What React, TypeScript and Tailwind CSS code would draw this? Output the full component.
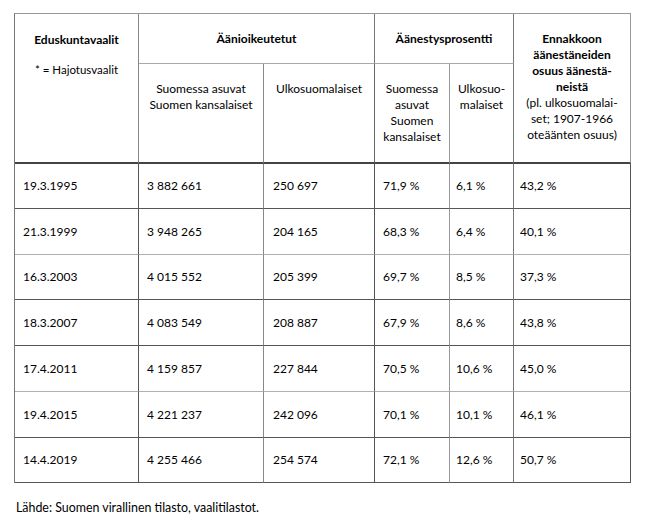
import React from "react";

const rows = [
  ["19.3.1995", "3 882 661", "250 697", "71,9 %", "6,1 %", "43,2 %"],
  ["21.3.1999", "3 948 265", "204 165", "68,3 %", "6,4 %", "40,1 %"],
  ["16.3.2003", "4 015 552", "205 399", "69,7 %", "8,5 %", "37,3 %"],
  ["18.3.2007", "4 083 549", "208 887", "67,9 %", "8,6 %", "43,8 %"],
  ["17.4.2011", "4 159 857", "227 844", "70,5 %", "10,6 %", "45,0 %"],
  ["19.4.2015", "4 221 237", "242 096", "70,1 %", "10,1 %", "46,1 %"],
  ["14.4.2019", "4 255 466", "254 574", "72,1 %", "12,6 %", "50,7 %"],
];

const lightRows = [1, 4];

export default function App() {
  return (
    <div className="w-[647px] h-[532px] bg-white text-black font-['Lato','Liberation_Sans',sans-serif] text-[12px] leading-[16px] pt-[13px]">
      <div className="ml-[14px] w-[617px] grid grid-cols-[124px_125px_111px_75px_64px_117px] grid-rows-[50px_100px_45px_46px_45px_46px_46px_46px_45px] border-l border-t border-l-[#777] border-t-[#999]">
        {/* header col 1 */}
        <div className="row-span-2 border-r border-r-[#888] border-b-2 border-b-[#444] flex flex-col items-center pt-[18px]">
          <div className="font-bold">Eduskuntavaalit</div>
          <div className="mt-[14px] text-[11.5px]">* = Hajotusvaalit</div>
        </div>
        <div className="col-span-2 border-r border-r-[#777] border-b border-b-[#aaa] flex items-center justify-center font-bold">
          Äänioikeutetut
        </div>
        <div className="col-span-2 border-r border-r-[#777] border-b border-b-[#aaa] flex items-center justify-center font-bold">
          Äänestysprosentti
        </div>
        <div className="row-span-2 border-r border-r-[#999] border-b-2 border-b-[#444] flex flex-col items-center text-center pt-[17px] leading-[16px]">
          <div className="font-bold">Ennakkoon</div>
          <div className="font-bold">äänestäneiden</div>
          <div className="font-bold">osuus äänestä-</div>
          <div className="font-bold">neistä</div>
          <div>(pl. ulkosuomalai-</div>
          <div>set; 1907-1966</div>
          <div>oteäänten osuus)</div>
        </div>
        {/* header row 2 */}
        <div className="border-r border-r-[#888] border-b-2 border-b-[#444] text-center pt-[17px]">
          <div>Suomessa asuvat</div>
          <div>Suomen kansalaiset</div>
        </div>
        <div className="border-r border-r-[#666] border-b-2 border-b-[#444] text-center pt-[17px]">
          <div>Ulkosuomalaiset</div>
        </div>
        <div className="border-r border-r-[#999] border-b-2 border-b-[#444] text-center pt-[17px]">
          <div>Suomessa</div>
          <div>asuvat</div>
          <div>Suomen</div>
          <div>kansalaiset</div>
        </div>
        <div className="border-r border-r-[#777] border-b-2 border-b-[#444] text-center pt-[17px]">
          <div>Ulkosuo-</div>
          <div>malaiset</div>
        </div>
        {/* body */}
        {rows.map((r, i) => {
          const hb = lightRows.includes(i) ? "border-b-[#b0b0b0]" : "border-b-[#555]";
          return (
            <React.Fragment key={i}>
              <div className={`border-r border-r-[#555] border-b ${hb} flex items-center pl-[8px]`}>{r[0]}</div>
              <div className={`border-r border-r-[#888] border-b ${hb} flex items-center pl-[8px]`}>{r[1]}</div>
              <div className={`border-r border-r-[#555] border-b ${hb} flex items-center pl-[9px]`}>{r[2]}</div>
              <div className={`border-r border-r-[#999] border-b ${hb} flex items-center pl-[8px]`}>{r[3]}</div>
              <div className={`border-r border-r-[#777] border-b ${hb} flex items-center pl-[6px]`}>{r[4]}</div>
              <div className={`border-r border-r-[#555] border-b ${hb} flex items-center pl-[6px]`}>{r[5]}</div>
            </React.Fragment>
          );
        })}
      </div>
      <div className="ml-[16px] mt-[17px] text-[12.4px]">Lähde: Suomen virallinen tilasto, vaalitilastot.</div>
    </div>
  );
}
